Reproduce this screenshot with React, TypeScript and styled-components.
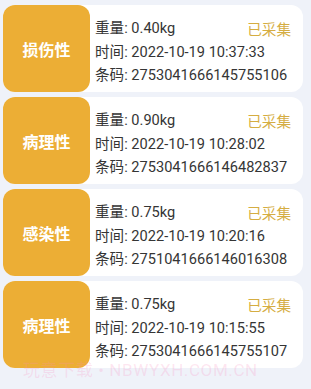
import React from "react";
import styled, { createGlobalStyle } from "styled-components";

const Global = createGlobalStyle`
  html, body { margin: 0; padding: 0; background: #eff2f9; }
  body { font-family: Roboto, "Noto Sans CJK SC", sans-serif; }
`;

const Page = styled.div`
  position: relative;
  width: 311px;
  height: 389px;
  overflow: hidden;
  background: #eff2f9;
  padding: 5px 8px 0 3px;
  box-sizing: border-box;
  display: flex;
  flex-direction: column;
  gap: 5px;
`;

const Card = styled.div`
  display: flex;
  height: 87px;
  background: #ffffff;
  border-radius: 12px;
`;

const Tag = styled.div`
  width: 87px;
  height: 87px;
  flex: none;
  border-radius: 12px;
  background: #ecae35;
  color: #ffffff;
  font-family: "Noto Sans CJK SC", sans-serif;
  font-weight: 700;
  font-size: 16px;
  display: flex;
  align-items: center;
  justify-content: center;
`;

const Info = styled.div`
  flex: 1;
  padding: 12px 12px 0 5px;
  display: flex;
  flex-direction: column;
`;

const Line = styled.div`
  display: flex;
  justify-content: space-between;
  align-items: center;
  height: 23.5px;
  line-height: 17px;
  font-size: 14.6px;
  color: #353535;
  white-space: nowrap;
`;

const Status = styled.span`
  color: #d5ad42;
  font-size: 14.6px;
  font-family: "Noto Sans CJK SC", sans-serif;
`;

const Watermark = styled.div`
  position: absolute;
  left: 23px;
  top: 364px;
  font-size: 17px;
  line-height: 13px;
  color: rgba(250, 140, 190, 0.22);
  white-space: nowrap;
  pointer-events: none;
  letter-spacing: 0.6px;
`;

const items = [
  { tag: "损伤性", w: "0.40kg", t: "2022-10-19 10:37:33", c: "2753041666145755106" },
  { tag: "病理性", w: "0.90kg", t: "2022-10-19 10:28:02", c: "2753041666146482837" },
  { tag: "感染性", w: "0.75kg", t: "2022-10-19 10:20:16", c: "2751041666146016308" },
  { tag: "病理性", w: "0.75kg", t: "2022-10-19 10:15:55", c: "2753041666145755107" },
];

export default function App() {
  return (
    <>
      <Global />
      <Page>
        {items.map((it, i) => (
          <Card key={i}>
            <Tag>{it.tag}</Tag>
            <Info>
              <Line>
                <span>重量: {it.w}</span>
                <Status>已采集</Status>
              </Line>
              <Line>时间: {it.t}</Line>
              <Line>条码: {it.c}</Line>
            </Info>
          </Card>
        ))}
        <Watermark>玩意下载 • NBWYXH.COM.CN</Watermark>
      </Page>
    </>
  );
}
